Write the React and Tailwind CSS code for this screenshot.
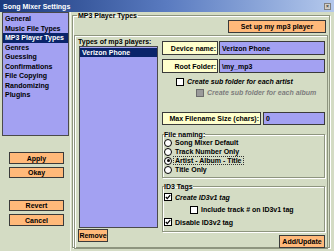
import React from "react";

const FONT = "font-['Liberation_Sans',Arial,sans-serif]";

function Btn({ children, className = "" }) {
  return (
    <div
      className={`bg-[#ffb97a] border border-[#3a3a3a] flex items-center justify-center text-[7px] font-bold text-black leading-none ${className}`}
    >
      {children}
    </div>
  );
}

function Check({ checked, disabled, className = "" }) {
  return (
    <div
      className={`w-[8px] h-[8px] border ${disabled ? "border-[#6c6c6c] bg-[#9a9a9a]" : "border-black bg-white"} flex items-center justify-center shrink-0 ${className}`}
    >
      {checked && (
        <svg width="6" height="6" viewBox="0 0 6 6">
          <path d="M0.8 3 L2.3 4.6 L5.2 1.2" stroke="black" strokeWidth="1.3" fill="none" />
        </svg>
      )}
    </div>
  );
}

function Radio({ checked }) {
  return (
    <div className="w-[8px] h-[8px] rounded-full border border-black bg-white flex items-center justify-center shrink-0">
      {checked && <div className="w-[3px] h-[3px] rounded-full bg-black" />}
    </div>
  );
}

const navItems = [
  "General",
  "Music File Types",
  "MP3 Player Types",
  "Genres",
  "Guessing",
  "Confirmations",
  "File Copying",
  "Randomizing",
  "Plugins",
];

export default function App() {
  return (
    <div className={`w-[334px] h-[251px] bg-[#d4dcc4] overflow-hidden flex flex-col ${FONT} text-[7px] font-bold text-black`}>
      {/* Title bar */}
      <div className="h-[12px] shrink-0 bg-gradient-to-r from-[#1c3a7e] via-[#5a7bc0] to-[#b4c8ec] flex items-center pl-[3px] pr-[3px] text-white text-[7px] font-bold leading-none">
        <span>Song Mixer Settings</span>
        <div className="ml-auto w-[7px] h-[7px] bg-[#d4d0c8] border border-[#808080] flex items-center justify-center text-[5px] text-[#333] leading-none">
          ×
        </div>
      </div>

      <div className="flex flex-1 min-h-0">
        {/* Left column */}
        <div className="w-[70px] shrink-0 flex flex-col pl-[2px]">
          <div className="w-[67px] h-[124px] bg-[#a3a1f2] border border-[#4a4a4a] pt-[1px] flex flex-col">
            {navItems.map((t) => (
              <div
                key={t}
                className={`h-[9.5px] flex items-center pl-[2px] leading-none ${t === "MP3 Player Types" ? "bg-[#0a246a] text-white" : "text-[#000000]"}`}
              >
                {t}
              </div>
            ))}
          </div>
          <Btn className="ml-[7px] mt-[16px] w-[55px] h-[12px]">Apply</Btn>
          <Btn className="ml-[7px] mt-[3px] w-[55px] h-[11px]">Okay</Btn>
          <Btn className="ml-[7px] mt-[22px] w-[55px] h-[11px]">Revert</Btn>
          <Btn className="ml-[7px] mt-[3px] w-[55px] h-[12px]">Cancel</Btn>
        </div>

        {/* Main */}
        <div className="flex-1 min-w-0 pr-[4px] pb-[3px] border-l border-[#f4f6ee]">
          <fieldset className="h-full border border-[#8e957f] shadow-[1px_1px_0_#ffffff,inset_1px_1px_0_#ffffff] ml-[1px] px-[1px] pb-[1px] flex flex-col">
            <legend className="ml-[3px] px-[1px] leading-none text-[7px]">MP3 Player Types</legend>
            <div className="flex justify-end pr-[2px] mt-[1px]">
              <Btn className="w-[98px] h-[13px]">Set up my mp3 player</Btn>
            </div>
            <div className="mt-[2px] flex-1 border border-[#8e957f] shadow-[inset_1px_1px_0_#ffffff] flex">
              {/* list column */}
              <div className="w-[85px] shrink-0 flex flex-col pl-[2px]">
                <div className="h-[10px] flex items-center pl-[1px] leading-none">Types of mp3 players:</div>
                <div className="ml-[2px] w-[79px] h-[182px] bg-[#a3a1f2] border border-[#4a4a4a] pt-[1px]">
                  <div className="h-[9px] bg-[#0a246a] text-white flex items-center pl-[2px] leading-none">Verizon Phone</div>
                </div>
                <Btn className="ml-[1px] mt-[1px] w-[30px] h-[13px]">Remove</Btn>
              </div>

              {/* fields column */}
              <div className="flex-1 min-w-0 flex flex-col pl-[2px] pr-[2px] pt-[5px]">
                <div className="flex h-[14px]">
                  <div className="w-[56px] bg-[#ffffcc] border border-[#3a3a3a] flex items-center justify-end pr-[1px] leading-none">Device name:</div>
                  <div className="ml-[1px] flex-1 bg-[#a3a1f2] border border-[#3a3a3a] flex items-center pl-[2px] leading-none">Verizon Phone</div>
                </div>
                <div className="flex h-[14px] mt-[4px]">
                  <div className="w-[56px] bg-[#ffffcc] border border-[#3a3a3a] flex items-center justify-end pr-[1px] leading-none">Root Folder:</div>
                  <div className="ml-[1px] flex-1 bg-[#a3a1f2] border border-[#3a3a3a] flex items-center pl-[2px] leading-none">\my_mp3</div>
                </div>
                <div className="flex items-center mt-[4px] ml-[14px] h-[9px]">
                  <Check />
                  <span className="ml-[3px] italic leading-none">Create sub folder for each artist</span>
                </div>
                <div className="flex items-center mt-[2px] ml-[34px] h-[9px] text-[#7d7d7d]">
                  <Check disabled />
                  <span className="ml-[3px] italic leading-none">Create sub folder for each album</span>
                </div>
                <div className="flex h-[13px] mt-[15px]">
                  <div className="w-[99px] bg-[#ffffcc] border border-[#3a3a3a] flex items-center justify-end pr-[1px] leading-none">Max Filename Size (chars):</div>
                  <div className="ml-[2px] flex-1 bg-[#a3a1f2] border border-[#3a3a3a] flex items-center pl-[2px] leading-none">0</div>
                </div>
                <fieldset className="mt-[6px] border border-[#8e957f] shadow-[1px_1px_0_#ffffff,inset_1px_1px_0_#ffffff] pl-[1px] pb-[3px] flex flex-col">
                  <legend className="leading-none px-[0px]">File naming:</legend>
                  {[
                    ["Song Mixer Default", false],
                    ["Track Number Only", false],
                    ["Artist - Album - Title", true],
                    ["Title Only", false],
                  ].map(([t, c]) => (
                    <div key={t} className="flex items-center h-[9px]">
                      <Radio checked={c} />
                      <span className={`ml-[2px] leading-none px-[1px] ${c ? "outline outline-1 outline-dotted outline-[#333]" : ""}`}>{t}</span>
                    </div>
                  ))}
                </fieldset>
                <fieldset className="mt-[5px] border border-[#8e957f] shadow-[1px_1px_0_#ffffff,inset_1px_1px_0_#ffffff] pl-[1px] pb-[2px] flex flex-col">
                  <legend className="leading-none px-[0px]">ID3 Tags</legend>
                  <div className="flex items-center h-[12.5px] mt-[1px]">
                    <Check checked />
                    <span className="ml-[3px] italic leading-none">Create ID3v1 tag</span>
                  </div>
                  <div className="flex items-center h-[12.5px] ml-[26px]">
                    <Check />
                    <span className="ml-[3px] leading-none">Include track # on ID3v1 tag</span>
                  </div>
                  <div className="flex items-center h-[12.5px]">
                    <Check checked />
                    <span className="ml-[3px] leading-none">Disable ID3v2 tag</span>
                  </div>
                </fieldset>
                <div className="flex justify-end mt-[3px]">
                  <Btn className="w-[46px] h-[13px]">Add/Update</Btn>
                </div>
              </div>
            </div>
          </fieldset>
        </div>
      </div>
    </div>
  );
}
